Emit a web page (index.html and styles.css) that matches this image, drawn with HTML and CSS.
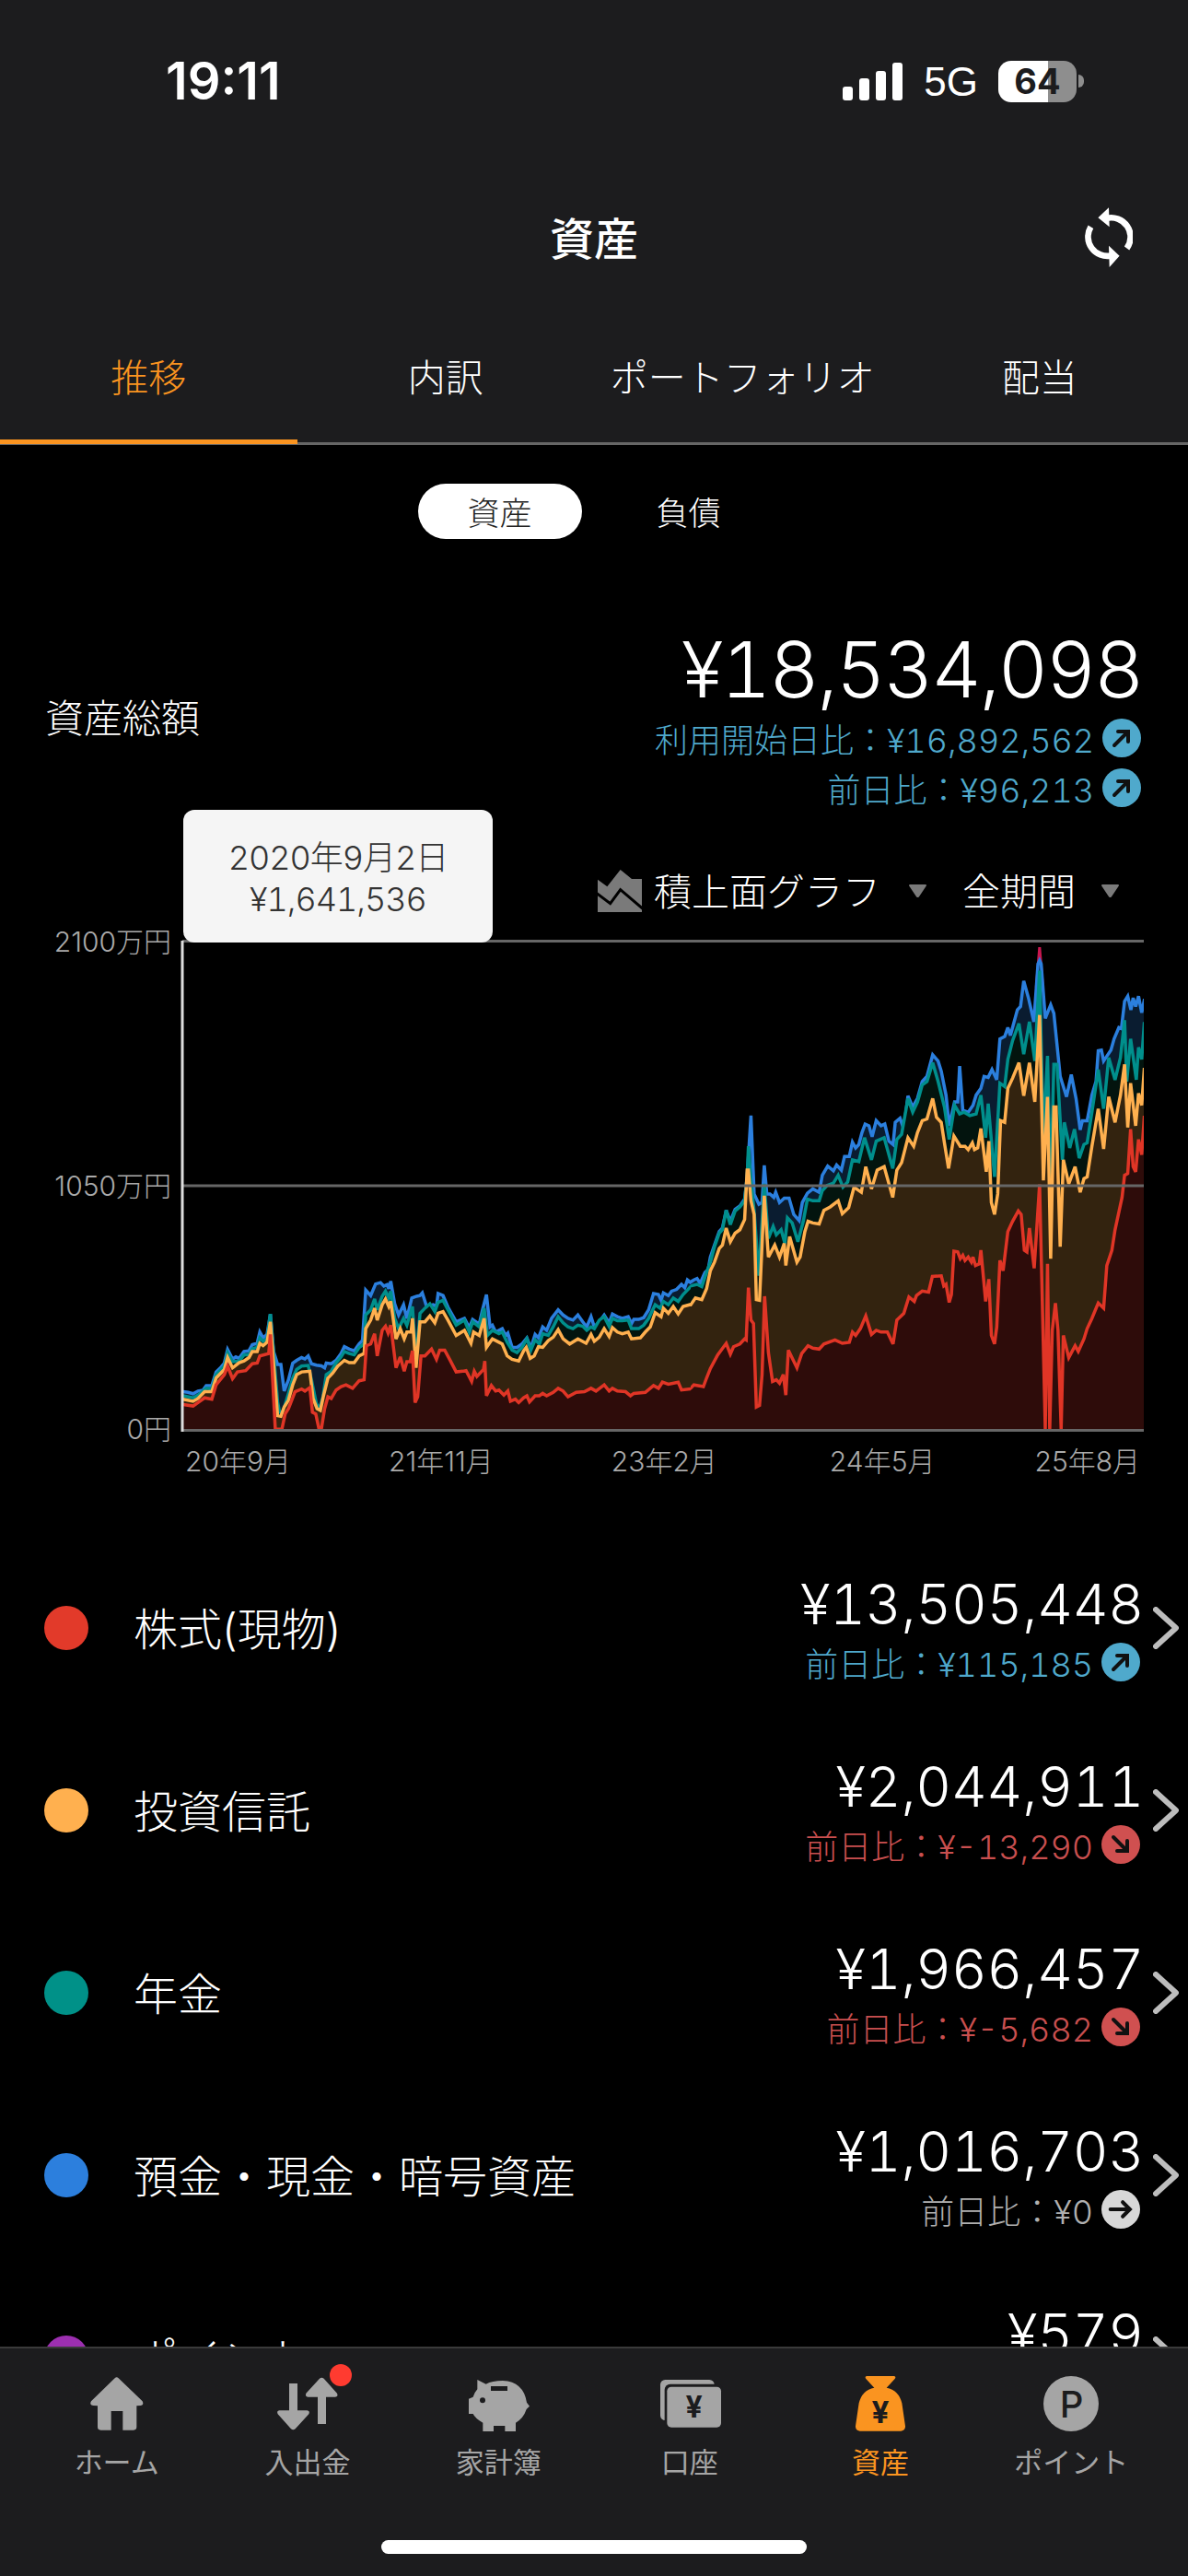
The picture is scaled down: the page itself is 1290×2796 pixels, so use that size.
FILE: index.html
```html
<!DOCTYPE html>
<html lang="ja">
<head>
<meta charset="utf-8">
<title>資産</title>
<link rel="stylesheet" href="styles.css">
</head>
<body>
<svg class="defs" width="0" height="0">
  <defs>
    <symbol id="arrow" viewBox="0 0 42 42">
      <path d="M13 29 L27 15 M17 14 H28 V25" fill="none" stroke="#111" stroke-width="4" stroke-linecap="round" stroke-linejoin="miter"/>
    </symbol>
    <symbol id="chev" viewBox="0 0 28 46">
      <path d="M3 3 L25 23 L3 43" fill="none" stroke="#bdbdbd" stroke-width="6" stroke-linecap="round" stroke-linejoin="round"/>
    </symbol>
  </defs>
</svg>
<div class="page">
  <header class="head">
    <div class="status">
      <span class="time">19:11</span>
      <div class="status-right">
        <div class="signal"><i class="s1"></i><i class="s2"></i><i class="s3"></i><i class="s4"></i></div>
        <span class="net">5G</span>
        <div class="batt"><div class="batt-body"><span>64</span></div><div class="batt-nub"></div></div>
      </div>
    </div>
    <div class="navbar">
      <span></span>
      <h1 class="title">資産</h1>
      <svg class="refresh" viewBox="960 580 156 208" width="52" height="69">
        <path d="M1030,622 A63,63 0 0 1 1097,720 M979,650 A63,63 0 0 0 1046,744" fill="none" stroke="#fff" stroke-width="20"/>
        <path d="M1038,587 L1003,620 L1040,650 Z M1040,782 L1073,745 L1038,712 Z" fill="#fff"/>
      </svg>
    </div>
    <nav class="tabs">
      <div class="tab active">推移</div>
      <div class="tab">内訳</div>
      <div class="tab">ポートフォリオ</div>
      <div class="tab">配当</div>
    </nav>
  </header>

  <div class="segment">
    <div class="seg on">資産</div>
    <div class="seg">負債</div>
  </div>

  <section class="summary">
    <div class="sum-label">資産総額</div>
    <div class="sum-right">
      <div class="big">¥18,534,098</div>
      <div class="delta up">利用開始日比：¥16,892,562<svg class="badge-ic up-bg" width="42" height="42"><use href="#arrow"/></svg></div>
      <div class="delta up">前日比：¥96,213<svg class="badge-ic up-bg" width="42" height="42"><use href="#arrow"/></svg></div>
    </div>
  </section>

  <div class="controls">
    <svg class="type-ic" viewBox="54 40 144 138" width="48" height="46">
      <path d="M54,72 L85,95 L128,40 L165,70 L198,70 L198,178 L54,178 Z" fill="#7a7a7a"/>
      <path d="M50,116 L95,150 L128,105 L202,168" fill="none" stroke="#000" stroke-width="9"/>
    </svg>
    <span class="ctl-text">積上面グラフ</span>
    <svg class="tri tri-a" viewBox="0 0 21 14" width="21" height="14"><path d="M2 1 H19 L11 13 H10 Z" fill="#7a7a7a" stroke="#7a7a7a" stroke-width="2" stroke-linejoin="round"/></svg>
    <span class="ctl-text ctl-b">全期間</span>
    <svg class="tri tri-b" viewBox="0 0 21 14" width="21" height="14"><path d="M2 1 H19 L11 13 H10 Z" fill="#7a7a7a" stroke="#7a7a7a" stroke-width="2" stroke-linejoin="round"/></svg>
  </div>

  <div class="tooltip">
    <div>2020年9月2日</div>
    <div>¥1,641,536</div>
  </div>

  <svg class="chart" viewBox="0 1000 1290 570" width="1290" height="570">
    <text class="ylab" x="186" y="1033">2100万円</text>
    <text class="ylab" x="186" y="1298">1050万円</text>
    <text class="ylab" x="186" y="1562">0円</text>

    <svg x="198" y="1021" width="552" height="531" viewBox="22.4 57 1545.6 1435" preserveAspectRatio="none">
      <polygon class="a-blue" points="-100,1700 -100,1380 25,1380 40,1382 55,1386 70,1378 85,1376 95,1362 112,1362 125,1322 140,1308 150,1296 160,1256 175,1284 185,1278 195,1282 210,1262 225,1260 235,1242 250,1238 258,1205 268,1222 280,1212 290,1152 300,1262 312,1300 322,1300 332,1378 345,1345 358,1296 370,1288 385,1280 395,1284 405,1275 415,1298 430,1302 445,1304 455,1310 460,1296 475,1298 490,1288 505,1268 515,1248 530,1255 545,1260 560,1240 570,1230 580,1082 595,1098 610,1064 625,1060 635,1070 645,1066 650,1078 656,1056 668,1122 680,1155 695,1125 705,1165 720,1105 735,1100 745,1098 752,1090 765,1130 785,1125 795,1130 800,1092 815,1098 830,1132 855,1175 880,1165 895,1192 905,1168 925,1182 935,1140 947,1095 958,1190 965,1185 975,1205 995,1195 1005,1215 1012,1208 1025,1250 1040,1250 1055,1240 1070,1222 1082,1252 1095,1212 1105,1222 1118,1190 1130,1200 1145,1165 1165,1140 1180,1155 1195,1165 1210,1170 1225,1155 1240,1175 1252,1190 1265,1160 1275,1190 1290,1175 1305,1155 1320,1178 1330,1152 1345,1160 1360,1165 1378,1160 1388,1180 1395,1168 1410,1168 1425,1163 1440,1140 1455,1092 1470,1095 1478,1112 1485,1090 1500,1098 1510,1085 1525,1080 1540,1065 1550,1075 1558,1052 1568,1060 1700,1060 1700,1700"/>
      <polygon class="a-teal" points="-100,1700 -100,1392 25,1392 55,1398 70,1390 95,1370 112,1372 125,1330 150,1305 160,1266 175,1292 195,1290 210,1272 225,1272 235,1254 250,1250 258,1222 268,1232 280,1225 290,1152 300,1270 312,1410 318,1440 328,1440 345,1385 358,1340 370,1315 385,1305 405,1303 415,1345 430,1415 440,1430 450,1395 460,1330 475,1320 490,1295 505,1278 515,1262 530,1268 545,1272 560,1250 575,1240 580,1155 595,1140 607,1108 615,1140 630,1100 640,1085 650,1105 656,1085 668,1165 680,1195 695,1165 705,1185 722,1130 733,1290 745,1150 760,1135 775,1122 790,1145 800,1118 815,1112 830,1140 855,1185 880,1170 895,1205 905,1175 925,1190 940,1135 950,1215 965,1200 985,1210 995,1205 1010,1235 1025,1258 1040,1265 1055,1250 1070,1225 1082,1258 1095,1228 1108,1240 1118,1210 1135,1215 1150,1190 1165,1160 1180,1178 1195,1190 1210,1195 1225,1185 1240,1188 1252,1200 1265,1190 1275,1195 1290,1170 1305,1160 1320,1188 1330,1165 1345,1172 1360,1172 1378,1170 1388,1195 1410,1195 1425,1185 1440,1165 1460,1125 1475,1135 1485,1115 1500,1125 1515,1105 1530,1115 1545,1095 1568,1072 1700,1072 1700,1700"/>
      <polygon class="a-orange" points="-100,1700 -100,1402 25,1402 55,1408 70,1400 90,1380 112,1380 125,1340 150,1315 160,1280 175,1310 195,1295 210,1290 225,1280 235,1262 250,1262 258,1238 268,1245 280,1235 290,1175 300,1300 312,1450 322,1452 332,1425 345,1405 358,1360 370,1330 385,1322 410,1320 420,1400 432,1430 442,1435 452,1390 465,1340 480,1325 495,1305 515,1288 530,1295 545,1295 560,1275 575,1268 580,1195 595,1170 607,1135 615,1170 630,1125 640,1108 650,1130 656,1115 672,1225 685,1195 697,1225 705,1205 718,1205 722,1165 733,1310 745,1175 760,1175 775,1158 790,1178 800,1150 815,1145 830,1170 855,1215 880,1200 900,1238 908,1205 925,1215 940,1165 947,1250 965,1225 985,1235 995,1240 1010,1275 1025,1285 1045,1290 1060,1260 1068,1250 1080,1282 1092,1275 1105,1248 1118,1250 1135,1230 1150,1220 1165,1198 1180,1225 1200,1240 1225,1225 1250,1238 1265,1212 1275,1232 1290,1220 1305,1195 1320,1218 1330,1192 1345,1205 1360,1210 1378,1205 1388,1225 1415,1222 1430,1205 1445,1190 1460,1148 1478,1160 1485,1135 1500,1150 1515,1130 1530,1152 1545,1130 1568,1124 1700,1124 1700,1700"/>
      <polygon class="a-red" points="-100,1700 -100,1418 25,1418 55,1422 70,1412 90,1398 112,1402 125,1360 150,1330 160,1305 175,1342 190,1322 215,1318 235,1298 250,1296 258,1275 285,1268 290,1212 300,1400 305,1490 325,1490 335,1445 345,1430 365,1380 385,1372 395,1378 410,1368 418,1440 428,1445 438,1490 445,1490 455,1430 465,1395 475,1400 490,1375 505,1365 520,1360 540,1370 560,1348 575,1345 582,1245 595,1240 607,1210 615,1275 630,1200 640,1188 648,1208 656,1185 672,1310 685,1278 697,1320 705,1292 715,1292 722,1260 730,1412 738,1395 748,1275 760,1275 780,1255 795,1285 805,1258 820,1258 835,1285 855,1322 875,1320 885,1318 902,1350 910,1320 918,1335 938,1315 942,1290 947,1392 962,1362 975,1378 985,1375 1000,1390 1012,1378 1020,1408 1035,1402 1045,1412 1060,1398 1070,1392 1078,1410 1095,1392 1108,1392 1118,1385 1130,1392 1150,1382 1165,1370 1180,1378 1195,1395 1220,1382 1245,1380 1265,1370 1280,1378 1305,1360 1320,1378 1330,1370 1345,1378 1370,1380 1385,1392 1395,1385 1430,1382 1455,1362 1470,1370 1482,1352 1500,1358 1530,1352 1540,1375 1568,1372 1700,1372 1700,1700"/>
    </svg>

    <svg x="750" y="1021" width="492" height="531" viewBox="0 57 1428.6 1435" preserveAspectRatio="none">
      <polygon class="a-tip" points="1090,190 1100,76 1110,190"/>
      <polygon class="a-blue" points="-100,1700 -100,1060 0,1058 10,1052 20,1048 30,1062 45,1030 55,1022 62,985 75,950 90,910 100,900 112,848 125,880 140,845 155,835 170,815 178,750 190,570 200,800 215,830 225,825 232,716 240,800 250,800 262,810 268,795 280,825 295,812 310,812 325,860 342,878 352,825 368,798 385,785 405,795 415,745 432,718 450,732 460,715 475,730 485,690 500,690 510,648 520,665 530,655 540,620 550,595 562,600 572,632 585,585 600,600 612,595 625,645 638,655 645,590 660,578 672,610 685,512 700,545 715,520 730,470 745,455 763,392 780,410 790,440 805,510 815,600 832,530 842,530 848,425 858,555 875,560 890,540 900,510 915,490 925,455 938,458 950,435 965,465 975,345 990,338 1000,312 1008,335 1030,260 1040,250 1050,175 1065,225 1082,295 1095,125 1100,115 1105,125 1118,285 1135,245 1145,270 1165,455 1185,515 1200,450 1215,520 1228,612 1235,585 1250,585 1265,510 1278,470 1285,380 1295,378 1302,410 1325,378 1335,345 1350,312 1358,315 1368,235 1378,220 1388,260 1395,225 1403,250 1412,220 1422,268 1430,232 1530,232 1530,1700"/>
      <polygon class="a-teal" points="-100,1700 -100,1072 0,1070 20,1065 35,1072 50,1030 62,1000 75,955 90,915 100,905 112,848 125,890 140,850 155,838 170,820 178,750 182,660 190,760 200,850 215,1040 225,880 232,770 245,930 260,895 270,920 285,905 297,945 305,870 320,885 338,940 355,880 368,815 385,820 405,820 415,790 430,775 450,768 465,745 480,780 495,765 510,700 530,705 548,635 570,700 585,645 610,635 637,725 650,640 665,625 685,520 700,560 715,530 730,480 745,470 763,415 780,470 800,545 815,640 832,540 848,565 862,560 880,570 900,565 915,510 930,635 938,535 958,750 975,475 990,485 1000,405 1015,350 1035,300 1050,390 1068,295 1085,410 1100,145 1112,640 1125,395 1135,790 1145,420 1155,420 1172,700 1178,590 1195,665 1210,610 1225,695 1240,655 1250,650 1265,560 1285,435 1302,550 1318,400 1338,465 1355,400 1368,290 1375,470 1387,345 1405,465 1412,370 1422,405 1430,300 1530,300 1530,1700"/>
      <polygon class="a-orange" points="-100,1700 -100,1124 0,1125 15,1105 35,1110 50,1078 62,1025 75,1000 90,960 100,950 112,900 125,940 140,915 155,905 170,875 178,730 182,730 190,820 200,860 207,1110 217,1112 232,805 245,985 265,950 280,985 295,945 300,1010 312,925 335,1000 345,985 360,910 370,880 385,885 405,888 420,848 440,838 465,820 478,858 498,840 515,780 538,795 552,720 570,785 588,730 610,720 637,810 650,730 665,708 685,635 703,660 715,620 730,585 745,580 763,520 775,575 790,590 800,650 813,725 830,630 850,660 865,660 875,670 888,650 895,670 905,665 915,608 932,735 940,645 948,825 958,860 968,800 977,585 990,590 1000,490 1015,460 1035,415 1050,512 1068,415 1085,530 1100,275 1112,760 1125,515 1135,990 1145,545 1152,545 1165,955 1175,700 1192,770 1212,720 1228,795 1240,755 1250,750 1265,660 1285,550 1302,668 1318,515 1338,590 1355,510 1368,420 1378,605 1387,475 1403,600 1412,505 1422,540 1430,435 1530,435 1530,1700"/>
      <polygon class="a-red" points="-100,1700 -100,1372 0,1370 10,1360 40,1365 50,1340 62,1312 85,1272 112,1238 125,1270 135,1248 155,1240 170,1225 175,1228 182,1075 190,1170 198,1180 207,1425 217,1420 225,1330 233,1100 245,1265 258,1350 270,1345 280,1355 292,1330 300,1390 308,1258 335,1310 350,1268 370,1245 385,1252 405,1255 420,1240 455,1228 478,1238 500,1235 510,1205 520,1215 535,1195 552,1158 570,1212 585,1200 600,1205 620,1205 638,1240 650,1170 672,1150 688,1102 705,1115 712,1098 730,1085 750,1088 762,1042 790,1040 798,1070 805,1065 815,1118 822,1095 830,968 842,970 850,990 858,980 865,995 875,985 885,1000 890,985 898,1010 910,1005 915,965 930,1115 940,1050 948,1215 958,1240 965,1190 975,995 985,1025 1000,910 1015,880 1033,850 1042,860 1052,965 1060,970 1068,900 1083,1018 1100,772 1118,1490 1125,1005 1132,1490 1140,1200 1150,1120 1158,1200 1168,1490 1175,1215 1192,1280 1212,1245 1222,1262 1240,1225 1250,1195 1265,1165 1285,1120 1302,1135 1312,1010 1328,965 1338,905 1360,810 1368,745 1378,740 1387,610 1395,720 1403,735 1412,640 1422,685 1430,575 1530,575 1530,1700"/>
    </svg>

    <line class="grid" x1="198" x2="1242" y1="1021.5" y2="1021.5"/>
    <line class="grid" x1="198" x2="1242" y1="1287" y2="1287"/>
    <line class="grid" x1="198" x2="1242" y1="1552.5" y2="1552.5"/>
    <line class="axis" x1="198" x2="198" y1="1021" y2="1554"/>
  </svg>

  <div class="xlabels">
    <span class="x1">20年9月</span>
    <span class="x2">21年11月</span>
    <span class="x3">23年2月</span>
    <span class="x4">24年5月</span>
    <span class="x5">25年8月</span>
  </div>

  <ul class="list">
    <li class="row">
      <i class="dot d-red"></i><span class="row-label">株式(現物)</span>
      <div class="row-right">
        <div class="amount">¥13,505,448</div>
        <div class="delta up">前日比：¥115,185<svg class="badge-ic up-bg" width="42" height="42"><use href="#arrow"/></svg></div>
      </div>
      <svg class="chev" width="28" height="46"><use href="#chev"/></svg>
    </li>
    <li class="row">
      <i class="dot d-orange"></i><span class="row-label">投資信託</span>
      <div class="row-right">
        <div class="amount">¥2,044,911</div>
        <div class="delta down">前日比：¥-13,290<svg class="badge-ic down-bg turn-down" width="42" height="42"><use href="#arrow"/></svg></div>
      </div>
      <svg class="chev" width="28" height="46"><use href="#chev"/></svg>
    </li>
    <li class="row">
      <i class="dot d-teal"></i><span class="row-label">年金</span>
      <div class="row-right">
        <div class="amount">¥1,966,457</div>
        <div class="delta down">前日比：¥-5,682<svg class="badge-ic down-bg turn-down" width="42" height="42"><use href="#arrow"/></svg></div>
      </div>
      <svg class="chev" width="28" height="46"><use href="#chev"/></svg>
    </li>
    <li class="row">
      <i class="dot d-blue"></i><span class="row-label">預金・現金・暗号資産</span>
      <div class="row-right">
        <div class="amount">¥1,016,703</div>
        <div class="delta flat">前日比：¥0<svg class="badge-ic flat-bg turn-flat" width="42" height="42"><use href="#arrow"/></svg></div>
      </div>
      <svg class="chev" width="28" height="46"><use href="#chev"/></svg>
    </li>
    <li class="row">
      <i class="dot d-purple"></i><span class="row-label">ポイント</span>
      <div class="row-right">
        <div class="amount">¥579</div>
        <div class="delta flat">前日比：¥0<svg class="badge-ic flat-bg turn-flat" width="42" height="42"><use href="#arrow"/></svg></div>
      </div>
      <svg class="chev" width="28" height="46"><use href="#chev"/></svg>
    </li>
  </ul>

  <footer class="tabbar">
    <div class="bar-item">
      <svg viewBox="21 72 240 180" width="80" height="60"><path class="ic" d="M134,79 Q140,73 146,79 L224,154 Q230,166 218,168 L205,169 V238 Q205,248 195,248 H160 V186 H122 V248 H88 Q78,248 78,238 V169 L64,168 Q50,166 57,154 Z"/></svg>
      <span>ホーム</span>
    </div>
    <div class="bar-item">
      <svg viewBox="642 72 240 180" width="80" height="60"><path class="ic" d="M702,96 H729 V184 H760 Q771,186 766,196 L722,244 Q715,250 708,244 L665,196 Q660,186 670,184 H702 Z M795,228 H822 V140 H852 Q863,138 858,128 L815,80 Q808,74 801,80 L757,128 Q753,138 763,140 H795 Z"/></svg>
      <i class="bar-badge"></i>
      <span>入出金</span>
    </div>
    <div class="bar-item">
      <svg viewBox="1260 72 240 180" width="80" height="60">
        <path class="ic" d="M1312,84 L1340,98 Q1360,87 1395,87 Q1462,90 1473,158 L1482,170 L1472,180 Q1462,210 1437,224 V252 H1402 V234 H1365 V252 H1330 V224 Q1305,210 1298,195 H1284 V146 L1298,140 Q1303,125 1312,115 Z"/>
        <rect class="ic-dark" x="1356" y="105" width="54" height="15"/>
        <circle class="ic-dark" cx="1329" cy="151" r="9"/>
      </svg>
      <span>家計簿</span>
    </div>
    <div class="bar-item">
      <svg viewBox="51 72 240 180" width="80" height="60">
        <rect class="ic" x="75" y="84" width="176" height="132" rx="16"/>
        <rect class="ic-dark" x="89" y="98" width="190" height="146" rx="18"/>
        <rect class="ic" x="97" y="107" width="176" height="132" rx="14"/>
        <text class="yen" x="185" y="208">¥</text>
      </svg>
      <span>口座</span>
    </div>
    <div class="bar-item active">
      <svg viewBox="675 72 240 180" width="80" height="60">
        <path class="ic-on" d="M750,72 H840 Q847,74 842,81 L815,110 Q855,118 865,160 L876,235 Q877,250 862,251 H728 Q713,250 714,235 L725,160 Q735,118 775,110 L748,81 Q743,74 750,72 Z"/>
        <text class="yen yen-lg" x="795" y="225">¥</text>
      </svg>
      <span>資産</span>
    </div>
    <div class="bar-item">
      <svg viewBox="1296 72 240 180" width="80" height="60">
        <circle class="ic" cx="1416" cy="162" r="90"/>
        <text class="pee" x="1418" y="206">P</text>
      </svg>
      <span>ポイント</span>
    </div>
    <div class="home-ind"></div>
  </footer>
</div>
</body>
</html>
```

FILE: styles.css
```css
* { box-sizing: border-box; }
html, body { margin: 0; padding: 0; background: #000; }
body {
  width: 1290px;
  height: 2796px;
  overflow: hidden;
  color: #fff;
  font-family: "Inter", "Noto Sans CJK JP", sans-serif;
  font-weight: 300;
}
.defs { position: absolute; }
.page { position: relative; width: 1290px; height: 2796px; overflow: hidden; }

/* header */
.head { background: #1c1c1e; }
.status {
  height: 176px;
  display: flex;
  align-items: center;
  justify-content: space-between;
  padding: 0 113px 0 180px;
}
.time { font-size: 56px; font-weight: 600; }
.status-right { display: flex; align-items: center; }
.signal { display: flex; align-items: flex-end; gap: 7px; height: 41px; }
.signal i { display: block; width: 11px; border-radius: 3px; background: #fff; }
.s1 { height: 15px; } .s2 { height: 24px; } .s3 { height: 32px; } .s4 { height: 41px; }
.net { font-size: 44px; font-weight: 400; margin: 2px 22px 0 23px; font-family: "Liberation Sans", sans-serif; }
.batt { display: flex; align-items: center; gap: 2px; }
.batt-body {
  width: 85px; height: 45px; border-radius: 14px;
  background: linear-gradient(90deg, #fff 0 54px, #8e8e8e 54px);
  display: flex; align-items: center; justify-content: center;
}
.batt-body span { font-size: 38px; font-weight: 700; color: #1c1c1e; }
.batt-nub { width: 6px; height: 14px; border-radius: 0 7px 7px 0; background: #8e8e8e; }

.navbar {
  height: 162px;
  display: grid;
  grid-template-columns: 1fr auto 1fr;
  align-items: center;
  padding-right: 60px;
}
.title { margin: 0; font-size: 48px; font-weight: 500; padding: 0 0 2px 60px; }
.refresh { justify-self: end; }

.tabs { display: flex; border-bottom: 3px solid #666; }
.tab {
  flex: 1;
  height: 142px;
  display: flex; align-items: center; justify-content: center;
  font-size: 41px;
  padding-bottom: 5px;
}
.tab.active { color: #fa9420; box-shadow: inset 0 -3px 0 #fa9420, 0 2px 0 #fa9420; }

/* segment */
.segment { display: flex; justify-content: center; gap: 27px; margin-top: 42px; }
.seg {
  width: 178px; height: 60px; border-radius: 30px;
  display: flex; align-items: center; justify-content: center;
  font-size: 35px;
  padding-bottom: 2px;
}
.seg.on { background: #fff; color: #222; }

/* summary */
.summary {
  display: flex; align-items: center; justify-content: space-between;
  margin-top: 97px;
  padding: 0 51px 0 49px;
}
.sum-label { font-size: 42px; margin-bottom: 5px; }
.sum-right { display: flex; flex-direction: column; align-items: flex-end; gap: 12px; }
.big {
  font-size: 84px; line-height: 90px; margin: 0 -1px -4px 0;
  font-variant-numeric: tabular-nums;
  letter-spacing: -2.3px;
}
.delta {
  display: flex; align-items: center; gap: 9px;
  height: 42px;
  font-size: 36px;
  white-space: nowrap;
  font-variant-numeric: tabular-nums;
}
.up { color: #4fa8cb; }
.down { color: #c94f4f; }
.flat { color: #b0b0b0; }
.badge-ic { border-radius: 50%; flex: none; }
.up-bg { background: #4fa9cc; }
.down-bg { background: #d05050; }
.flat-bg { background: #d8d8d8; }
.turn-down { transform: rotate(90deg); }
.turn-flat { transform: rotate(45deg); }

/* chart controls */
.controls {
  display: flex; align-items: center; justify-content: flex-end;
  height: 46px;
  margin-top: 68px;
  padding-right: 74px;
}
.ctl-text { font-size: 41px; margin: 0 0 5px 13px; white-space: nowrap; }
.ctl-b { margin-left: 38px; }
.tri-a { margin-left: 30px; }
.tri-b { margin-left: 27px; }

.tooltip {
  position: absolute;
  left: 199px; top: 879px;
  width: 336px; height: 144px;
  border-radius: 12px;
  background: #f5f5f5;
  color: #333;
  font-size: 36px;
  line-height: 45px;
  text-align: center;
  padding-top: 30px;
  font-variant-numeric: tabular-nums;
  letter-spacing: -1px;
  z-index: 2;
}

/* chart */
.chart { display: block; margin-top: 10px; }
.ylab { font-size: 30px; fill: #aaa; text-anchor: end; }
.grid { stroke: #666; stroke-width: 3; }
.axis { stroke: #ddd; stroke-width: 3; }
.chart polygon { stroke-width: 3.5; vector-effect: non-scaling-stroke; stroke-linejoin: miter; stroke-miterlimit: 3; }
.a-blue { fill: #0a1c30; stroke: #2b7fde; }
.a-teal { fill: #03140e; stroke: #008f8c; }
.a-orange { fill: #33230f; stroke: #ffb04f; }
.a-red { fill: #2e0c0a; stroke: #e03526; }
.chart .a-tip { fill: #c8174f; stroke: #c8174f; stroke-width: 3; stroke-miterlimit: 10; }

.xlabels { display: flex; margin-top: -4px; padding-left: 201px; font-size: 30px; line-height: 40px; color: #aaa; }
.xlabels span { white-space: nowrap; }
.x2 { margin-left: 106px; }
.x3 { margin-left: 128px; }
.x4 { margin-left: 122px; }
.x5 { margin-left: 108px; }

/* list */
.list { list-style: none; margin: 62px 0 0; padding: 0; }
.row {
  height: 198px;
  display: flex; align-items: center;
  padding: 0 10px 0 48px;
}
.dot { width: 48px; height: 48px; border-radius: 50%; flex: none; }
.d-red { background: #e23a2a; }
.d-orange { background: #ffb04f; }
.d-teal { background: #009188; }
.d-blue { background: #2c7fdd; }
.d-purple { background: #9c2fb0; }
.row-label { font-size: 48px; margin: 0 0 5px 49px; white-space: nowrap; }
.row-right { margin-left: auto; display: flex; flex-direction: column; align-items: flex-end; gap: 10px; }
.amount {
  font-size: 60px; line-height: 64px; margin-right: -4px;
  font-variant-numeric: tabular-nums;
  letter-spacing: -0.2px;
}
.chev { margin-left: 14px; flex: none; }

/* tab bar */
.tabbar {
  position: absolute;
  left: 0; right: 0; bottom: 0;
  height: 249px;
  background: #1c1c1e;
  border-top: 2px solid #3a3a3a;
  display: flex;
  padding: 30px 23px 0;
  z-index: 3;
}
.bar-item {
  position: relative;
  flex: 1;
  display: flex; flex-direction: column; align-items: center;
  color: #a5a5a5;
}
.bar-item span { margin-top: 14px; font-size: 31px; line-height: 40px; font-weight: 400; white-space: nowrap; }
.bar-item.active { color: #fa9420; }
.ic { fill: #a5a5a5; }
.ic-dark { fill: #1c1c1e; }
.ic-on { fill: #fa9420; }
.yen { font-size: 96px; font-weight: 700; fill: #1c1c1e; text-anchor: middle; font-family: "Inter", sans-serif; }
.yen-lg { font-size: 100px; }
.pee { font-size: 120px; font-weight: 500; fill: #1c1c1e; text-anchor: middle; font-family: "Inter", sans-serif; }
.bar-badge {
  position: absolute;
  left: calc(50% + 24px); top: -13px;
  width: 24px; height: 24px;
  border-radius: 50%;
  background: #ff3b30;
}
.home-ind {
  position: absolute;
  left: 414px; bottom: 24px;
  width: 462px; height: 15px;
  border-radius: 8px;
  background: #fff;
}
```
